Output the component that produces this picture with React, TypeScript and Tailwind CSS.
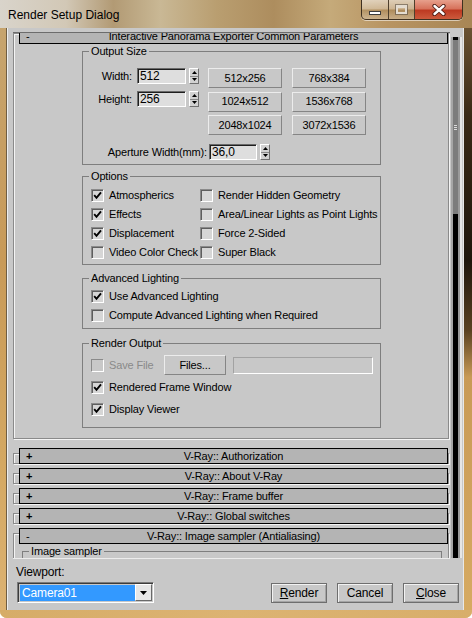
import React from 'react';

const UI = "font-['Liberation_Sans',Arial,sans-serif] text-[11px] tracking-[-0.15px] leading-none text-black";

function Check({ checked = false, disabled = false }: { checked?: boolean; disabled?: boolean }) {
  return (
    <div
      className={`w-[13px] h-[13px] shrink-0 flex items-center justify-center border border-t-[#8a8a8a] border-l-[#8a8a8a] border-r-white border-b-white ${
        disabled ? 'bg-[#c8c8c8]' : 'bg-[#d6d6d6] shadow-[inset_1px_1px_0_#5e5e5e]'
      }`}
    >
      {checked && (
        <svg width="9" height="9" viewBox="0 0 9 9">
          <path d="M1.2 4.2 L3.5 6.8 L8 1.4" fill="none" stroke="#000" strokeWidth="1.9" />
        </svg>
      )}
    </div>
  );
}

function CheckRow({ label, checked, disabled }: { label: string; checked?: boolean; disabled?: boolean }) {
  return (
    <div className="flex items-center gap-[5px] h-[19px] whitespace-nowrap">
      <Check checked={checked} disabled={disabled} />
      <span className={disabled ? 'text-[#8a8a8a]' : ''}>{label}</span>
    </div>
  );
}

function Spinner() {
  return (
    <div className="w-[10px] h-[16px] shrink-0 flex flex-col bg-[#d2d2d2] border border-t-white border-l-white border-r-[#707070] border-b-[#707070]">
      <div className="flex-1 flex items-center justify-center border-b border-[#8a8a8a]">
        <svg width="5" height="3" viewBox="0 0 5 3">
          <path d="M0 3 L2.5 0 L5 3Z" fill="#000" />
        </svg>
      </div>
      <div className="flex-1 flex items-center justify-center">
        <svg width="5" height="3" viewBox="0 0 5 3">
          <path d="M0 0 L5 0 L2.5 3Z" fill="#000" />
        </svg>
      </div>
    </div>
  );
}

function NumField({ value, w }: { value: string; w: string }) {
  return (
    <div className={`${w} h-[16px] shrink-0 flex items-center pl-[2px] text-[12px] bg-[#dedede] border border-t-[#6a6a6a] border-l-[#6a6a6a] border-r-white border-b-white shadow-[inset_1px_1px_0_#1e1e1e]`}>
      {value}
    </div>
  );
}

function Btn({ label, className = '' }: { label: React.ReactNode; className?: string }) {
  return (
    <div className={`flex items-center justify-center bg-[#c8c8c8] border border-t-[#ececec] border-l-[#ececec] border-r-[#858585] border-b-[#858585] ${className}`}>
      {label}
    </div>
  );
}

function Group({ title, className = '', children }: { title: string; className?: string; children: React.ReactNode }) {
  return (
    <fieldset className={`border border-[#7e7e7e] ${className}`}>
      <legend className="ml-[6px] px-[2px] leading-[14px]">{title}</legend>
      {children}
    </fieldset>
  );
}

function Header({ title, open }: { title: string; open?: boolean }) {
  return (
    <div className="-mt-[6px] ml-[5px] h-[16px] grid grid-cols-[22px_1fr_22px] items-center bg-[#b4b4b4] border border-black">
      <span className={`pl-[6px] ${open ? '' : 'font-bold'}`}>{open ? '-' : '+'}</span>
      <span className="text-center whitespace-nowrap">{title}</span>
      <span />
    </div>
  );
}

function Rollout({ title, open, className = '', children }: { title: string; open?: boolean; className?: string; children?: React.ReactNode }) {
  return (
    <div
      className={`mr-[1px] border border-[#8a8a8a] shadow-[inset_1px_1px_0_#f4f4f4,1px_1px_0_#f4f4f4] ${open ? '' : 'h-[11px]'} ${className}`}
    >
      <Header title={title} open={open} />
      {children}
    </div>
  );
}

const presets = ['512x256', '768x384', '1024x512', '1536x768', '2048x1024', '3072x1536'];

function CommonParams() {
  return (
    <div className="ml-[68px] w-[299px] flex flex-col pb-[10px]">
      <Group title="Output Size" className="pb-[4px]">
        <div className="flex mt-[10px]">
          <div className="w-[125px] flex flex-col gap-[7px]">
            <div className="flex items-center h-[16px]">
              <span className="w-[50px] text-right pr-[1px]">Width:</span>
              <div className="ml-[4px] flex gap-[3px]">
                <NumField value="512" w="w-[49px]" />
                <Spinner />
              </div>
            </div>
            <div className="flex items-center h-[16px]">
              <span className="w-[50px] text-right pr-[1px]">Height:</span>
              <div className="ml-[4px] flex gap-[3px]">
                <NumField value="256" w="w-[49px]" />
                <Spinner />
              </div>
            </div>
          </div>
          <div className="grid grid-cols-[74px_74px] gap-x-[10px] gap-y-[3.5px]">
            {presets.map((p) => (
              <Btn key={p} label={p} className="h-[20px]" />
            ))}
          </div>
        </div>
        <div className="flex items-center mt-[9px] gap-[2px]">
          <span className="w-[124px] text-right whitespace-nowrap">Aperture Width(mm):</span>
          <div className="flex gap-[3px]">
            <NumField value="36,0" w="w-[48px]" />
            <Spinner />
          </div>
        </div>
      </Group>

      <Group title="Options" className="mt-[4px] pb-[2px]">
        <div className="grid grid-cols-[109px_1fr] pl-[8px] mt-[3px]">
          <CheckRow label="Atmospherics" checked />
          <CheckRow label="Render Hidden Geometry" />
          <CheckRow label="Effects" checked />
          <CheckRow label="Area/Linear Lights as Point Lights" />
          <CheckRow label="Displacement" checked />
          <CheckRow label="Force 2-Sided" />
          <CheckRow label="Video Color Check" />
          <CheckRow label="Super Black" />
        </div>
      </Group>

      <Group title="Advanced Lighting" className="mt-[6px] pb-[3px]">
        <div className="flex flex-col pl-[8px] mt-[2px]">
          <CheckRow label="Use Advanced Lighting" checked />
          <CheckRow label="Compute Advanced Lighting when Required" />
        </div>
      </Group>

      <Group title="Render Output" className="mt-[7px] pb-[8px]">
        <div className="flex flex-col pl-[8px] mt-[5px]">
          <div className="flex items-center h-[20px]">
            <div className="w-[73px]">
              <CheckRow label="Save File" disabled />
            </div>
            <Btn label="Files..." className="w-[62px] h-[20px]" />
            <div className="ml-[7px] w-[140px] h-[17px] border border-t-[#a2a2a2] border-l-[#a2a2a2] border-r-white border-b-white" />
          </div>
          <div className="flex flex-col gap-[3px] mt-[3px]">
            <CheckRow label="Rendered Frame Window" checked />
            <CheckRow label="Display Viewer" checked />
          </div>
        </div>
      </Group>
    </div>
  );
}

function Scrollbar() {
  return (
    <div className="w-[13px] flex pt-[5px] pb-[1px] pl-[1px]">
      <div className="w-[2px] bg-[#a6a6a6]" />
      <div className="w-[5px] flex flex-col">
        <div className="h-[3px] bg-black" />
        <div className="h-[174px] bg-[#7c7c7c] flex flex-col items-center justify-center gap-[1px]">
          <div className="w-[3px] h-px bg-[#dcdcdc]" />
          <div className="w-[3px] h-px bg-[#dcdcdc]" />
          <div className="w-[3px] h-px bg-[#dcdcdc]" />
        </div>
        <div className="flex-1 bg-black" />
      </div>
      <div className="w-[2px] bg-[#9a9a9a]" />
      <div className="w-[2px] bg-[#e6e6e6]" />
    </div>
  );
}

const bottomBtn =
  'w-[56px] h-[20px] flex items-center justify-center border border-[#6e6e6e] shadow-[inset_1px_1px_0_#f2f2f2,inset_-1px_-1px_0_#a4a4a4]';

export default function App() {
  return (
    <div className={`${UI} w-[472px] h-[618px] flex flex-col overflow-hidden rounded-b-[7px] bg-[linear-gradient(180deg,#c7ab80_0%,#cfa865_50%,#dab06c_100%)]`}>
      {/* title bar */}
      <div className="h-[28px] flex items-start bg-[linear-gradient(90deg,#d9d4cb_0%,#d2c8b6_14%,#b29a74_24%,#c9b895_34%,#b99e70_46%,#ad8d5e_58%,#c5aa7a_70%,#b89462_82%,#a88655_100%)]">
        <span className="pl-[8px] pt-[8px] font-['Liberation_Sans',sans-serif] text-[12px] tracking-normal leading-[14px] text-black">
          Render Setup Dialog
        </span>
        <div className="ml-auto mr-[9px] h-[20px] flex rounded-b-[5px] overflow-hidden border border-t-0 border-[#3e3020] shadow-[0_1px_0_rgba(255,255,255,0.55)]">
          <div className="w-[27px] flex items-center justify-center border-r border-[#4e3f2c] bg-[linear-gradient(180deg,rgba(255,255,255,0.55)_0%,rgba(255,255,255,0.3)_48%,rgba(120,90,50,0.15)_52%,rgba(255,255,255,0.25)_100%)]">
            <div className="mt-[6px] w-[12px] h-[4px] bg-white border border-[#3c3c3c]" />
          </div>
          <div className="w-[26px] flex items-center justify-center border-r border-[#4e3f2c] bg-[linear-gradient(180deg,rgba(255,255,255,0.55)_0%,rgba(255,255,255,0.3)_48%,rgba(120,90,50,0.15)_52%,rgba(255,255,255,0.25)_100%)]">
            <div className="w-[11px] h-[9px] border-[2px] border-t-[3px] border-[#e4dcd0] shadow-[0_0_0_1px_rgba(90,80,70,0.6)]" />
          </div>
          <div className="w-[47px] flex items-center justify-center bg-[linear-gradient(180deg,#e7a08c_0%,#d7735c_45%,#bd3a22_55%,#cc5a3c_100%)]">
            <svg width="16" height="12" viewBox="0 0 16 12">
              <path d="M3.5 2 L12.5 10 M12.5 2 L3.5 10" stroke="#4a1a12" strokeWidth="4.2" strokeLinecap="round" />
              <path d="M3.5 2 L12.5 10 M12.5 2 L3.5 10" stroke="#ffffff" strokeWidth="2.4" strokeLinecap="round" />
            </svg>
          </div>
        </div>
      </div>

      {/* body */}
      <div className="flex h-[582px]">
        <div className="w-[7px] bg-[linear-gradient(180deg,#c6a46e_0%,#c89a58_40%,#d4a862_75%,#dcb272_100%)]" />
        <div className="w-[456px] flex flex-col bg-[#c8c8c8] border-l border-[#eeeeee] shadow-[-1px_0_0_#6f5d42]">
          <div className="flex pt-[4px]">
            <div className="w-[5px]" />
            <div className="w-[437px] h-[527px] overflow-hidden flex flex-col border-t border-b border-t-[#6c6c6c] border-b-[#ececec]">
              <Rollout title="Interactive Panorama Exporter Common Parameters" open>
                <CommonParams />
              </Rollout>
              <Rollout title="V-Ray:: Authorization" className="mt-[14px]" />
              <Rollout title="V-Ray:: About V-Ray" className="mt-[9px]" />
              <Rollout title="V-Ray:: Frame buffer" className="mt-[9px]" />
              <Rollout title="V-Ray:: Global switches" className="mt-[9px]" />
              <Rollout title="V-Ray:: Image sampler (Antialiasing)" open className="mt-[9px]">
                <Group title="Image sampler" className="ml-[8px] mr-[6px] h-[40px]">
                  <div />
                </Group>
              </Rollout>
            </div>
            <Scrollbar />
          </div>

          <div className="flex flex-col pl-[8px] pr-[4px] text-[12px]">
            <span className="mt-[7px] leading-[13px]">Viewport:</span>
            <div className="flex items-center mt-[3px]">
              <div className="ml-[1px] w-[137px] h-[21px] flex items-center p-[1px] pl-[2px] bg-[#c8c8c8] border border-t-[#7a7a7a] border-l-[#7a7a7a] border-r-white border-b-white shadow-[inset_1px_1px_0_#3c3c3c]">
                <div className="flex-1 h-[16px] flex items-center pl-[2px] bg-[#3399ff] text-white">Camera01</div>
                <div className="w-[17px] h-[17px] flex items-center justify-center bg-[#e6e6e6] border border-t-white border-l-white border-r-[#6a6a6a] border-b-[#6a6a6a]">
                  <svg width="7" height="4" viewBox="0 0 7 4">
                    <path d="M0 0 L7 0 L3.5 4Z" fill="#000" />
                  </svg>
                </div>
              </div>
              <div className="ml-auto flex gap-[10px]">
                <div className={bottomBtn}>
                  <span><span className="underline">R</span>ender</span>
                </div>
                <div className={bottomBtn}>Cancel</div>
                <div className={bottomBtn}>
                  <span><span className="underline">C</span>lose</span>
                </div>
              </div>
            </div>
          </div>
        </div>
        <div className="w-[9px] bg-[linear-gradient(180deg,#6a5232_0%,#3a2a16_15%,#1e160c_40%,#5a4222_52%,#c89a56_60%,#d6aa62_100%)] border-l border-[#e8e8e8]" />
      </div>
      <div className="h-[8px] bg-[linear-gradient(90deg,#d6ac68_0%,#dcb372_50%,#d8ae6a_100%)]" />
    </div>
  );
}
